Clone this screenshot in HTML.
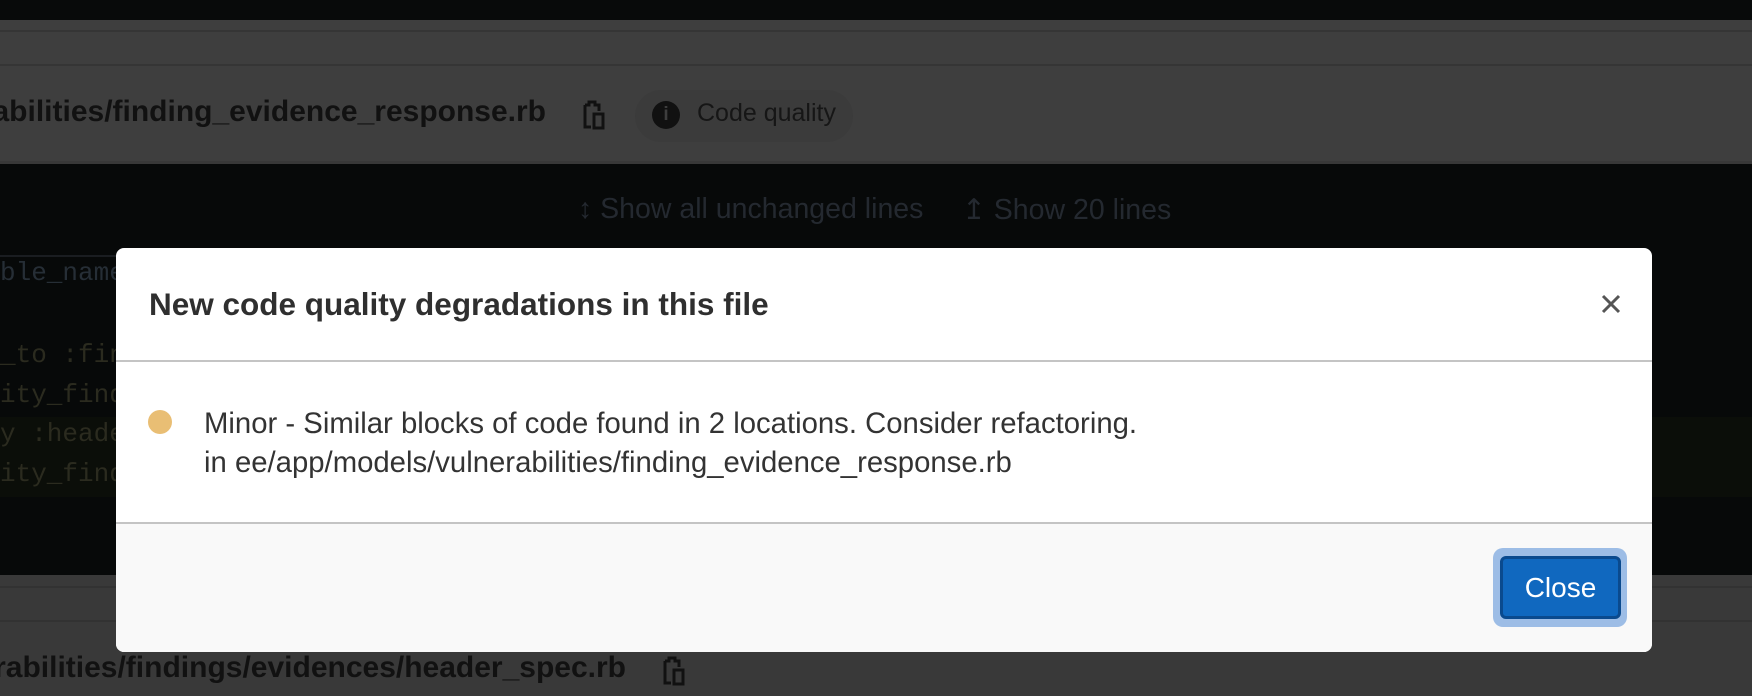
<!DOCTYPE html>
<html><head><meta charset="utf-8"><style>
*{margin:0;padding:0;box-sizing:border-box}
body{width:1752px;height:696px;overflow:hidden;background:#070909;font-family:"Liberation Sans",sans-serif;position:relative}
.abs{position:absolute}
.mono{font-family:"Liberation Mono",monospace;font-size:26px;white-space:pre}
</style></head><body>
<div class="abs" style="left:0;top:0;width:1752px;height:20px;background:#080a0a"></div>
<div class="abs" style="left:0;top:20px;width:1752px;height:143px;background:#3e3e3e"></div>
<div class="abs" style="left:0;top:30px;width:1752px;height:2px;background:#353535"></div>
<div class="abs" style="left:0;top:64px;width:1752px;height:2px;background:#353535"></div>
<div class="abs" style="left:0;top:161px;width:1752px;height:3px;background:#383838"></div>
<div class="abs" style="right:1206px;top:95px;font-size:30px;font-weight:bold;color:#111;white-space:nowrap">rabilities/finding_evidence_response.rb</div>
<svg class="abs" style="left:581px;top:99px" width="26" height="32" viewBox="0 0 26 32"><path d="M4 6h4v-3h6v3h4v6M4 6v22h6" fill="none" stroke="#111" stroke-width="3"/><rect x="13" y="15" width="9" height="14" fill="none" stroke="#111" stroke-width="3"/></svg>
<div class="abs" style="left:635px;top:90px;width:218px;height:52px;border-radius:26px;background:#3b3b3b"></div>
<div class="abs" style="left:652px;top:101px;width:28px;height:28px;border-radius:50%;background:#111;color:#3e3e3e;font-weight:bold;font-size:19px;text-align:center;line-height:28px">i</div>
<div class="abs" style="left:697px;top:99px;font-size:25px;color:#161616">Code quality</div>
<div class="abs" style="left:578px;top:193px;font-size:28.5px;color:#242930;white-space:nowrap">↕ Show all unchanged lines</div>
<div class="abs" style="left:962px;top:193px;font-size:28.5px;color:#242930;white-space:nowrap">↥ Show 20 lines</div>
<div class="abs" style="left:0;top:255px;width:130px;height:2px;background:#1a1d21"></div>
<div class="abs" style="left:0;top:417px;width:1752px;height:80px;background:#0b0e09"></div>
<div class="abs mono" style="left:0;top:258px;color:#262e36">ble_name</div>
<div class="abs mono" style="left:0;top:340px;color:#2b2b1f">_to :fin</div>
<div class="abs mono" style="left:0;top:380px;color:#2b2b1f">ity_find</div>
<div class="abs mono" style="left:0;top:419px;color:#2b2b1f">y :heade</div>
<div class="abs mono" style="left:0;top:459px;color:#2b2b1f">ity_find</div>
<div class="abs" style="left:0;top:575px;width:1752px;height:121px;background:#393939"></div>
<div class="abs" style="left:0;top:586px;width:1752px;height:2px;background:#323232"></div>
<div class="abs" style="left:0;top:620px;width:1752px;height:2px;background:#323232"></div>
<div class="abs" style="right:1126px;top:651px;font-size:30px;font-weight:bold;color:#111;white-space:nowrap">erabilities/findings/evidences/header_spec.rb</div>
<svg class="abs" style="left:661px;top:655px" width="26" height="32" viewBox="0 0 26 32"><path d="M4 6h4v-3h6v3h4v6M4 6v22h6" fill="none" stroke="#111" stroke-width="3"/><rect x="13" y="15" width="9" height="14" fill="none" stroke="#111" stroke-width="3"/></svg>

<div class="abs" style="left:116px;top:248px;width:1536px;height:404px;background:#fff;border-radius:8px;overflow:hidden">
  <div class="abs" style="left:33px;top:38px;font-size:31.5px;font-weight:bold;color:#2f2f2f">New code quality degradations in this file</div>
  <svg class="abs" style="left:1485px;top:46px" width="20" height="20" viewBox="0 0 20 20"><path d="M2 2L18 18M18 2L2 18" stroke="#555" stroke-width="3"/></svg>
  <div class="abs" style="left:0;top:112px;width:1536px;height:2px;background:#c4c4c4"></div>
  <div class="abs" style="left:32px;top:162px;width:24px;height:24px;border-radius:50%;background:#e9be74"></div>
  <div class="abs" style="left:88px;top:156px;font-size:29.3px;line-height:39px;color:#333;white-space:nowrap">Minor - Similar blocks of code found in 2 locations. Consider refactoring.<br>in ee/app/models/vulnerabilities/finding_evidence_response.rb</div>
  <div class="abs" style="left:0;top:274px;width:1536px;height:2px;background:#c4c4c4"></div>
  <div class="abs" style="left:0;top:276px;width:1536px;height:128px;background:#f9f9f9"></div>
  <div class="abs" style="left:1377px;top:300px;width:134px;height:79px;border-radius:10px;background:#9dbde6"></div>
  <div class="abs" style="left:1384px;top:308px;width:121px;height:63px;border-radius:6px;background:#1068bf;border:3px solid #0a4a8e;color:#fff;font-size:28px;text-align:center;line-height:57px">Close</div>
</div>
</body></html>
